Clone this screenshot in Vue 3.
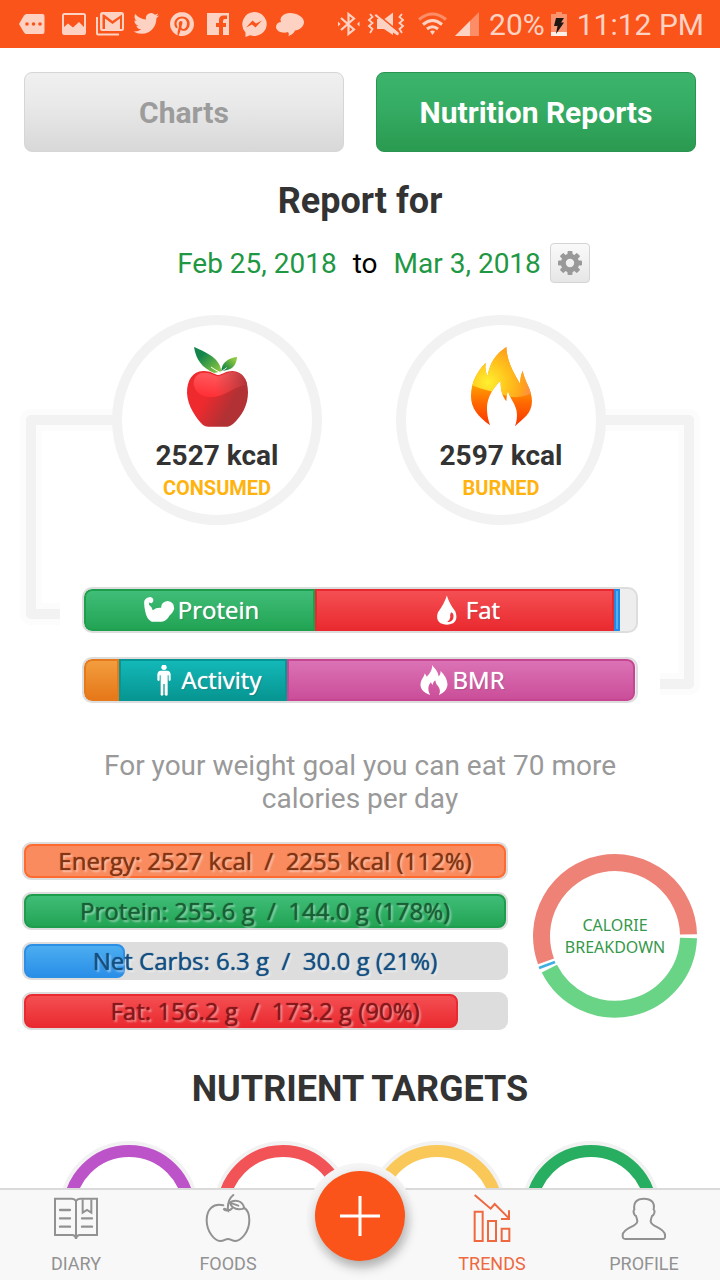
<script setup>
const intake = [
  { key: 'protein', label: 'Protein', width: 231 / 552 },
  { key: 'fat', label: 'Fat', width: 299 / 552 },
  { key: 'carbs', label: '', width: 6 / 552 },
]
const burned = [
  { key: 'tef', label: '', width: 35 / 552 },
  { key: 'activity', label: 'Activity', width: 168 / 552 },
  { key: 'bmr', label: 'BMR', width: 348 / 552 },
]
const macros = [
  { key: 'energy', text: 'Energy: 2527 kcal  /  2255 kcal (112%)', pct: 100 },
  { key: 'protein', text: 'Protein: 255.6 g  /  144.0 g (178%)', pct: 100 },
  { key: 'carbs', text: 'Net Carbs: 6.3 g  /  30.0 g (21%)', pct: 21 },
  { key: 'fat', text: 'Fat: 156.2 g  /  173.2 g (90%)', pct: 90 },
]
const targets = [
  { color: '#bd53c9', value: '88%' },
  { color: '#f15356', value: '110%' },
  { color: '#fac858', value: '89%' },
  { color: '#28ae61', value: '100%' },
]
const teeth = [0, 45, 90, 135, 180, 225, 270, 315]
const pc = (f) => ({ width: f * 100 + '%' })
</script>

<template>
  <div class="screen">
    <header class="status">
      <svg class="notes" viewBox="18 10 290 28" width="290" height="28" aria-hidden="true">
        <g fill="currentColor">
          <path d="M26.500 14H42.500Q44.500 14 44.500 16V32Q44.500 34 42.500 34H26.500Q25 34 24 32.500L19 24L24 15.500Q25 14 26.500 14Z" />
          <path fill-rule="evenodd" d="M64.500 13H83.500Q86 13 86 15.500V32.500Q86 35 83.500 35H64.500Q62 35 62 32.500V15.500Q62 13 64.500 13ZM64 15V27L68 23.500L73 27.500L79 22L84 27V15Z" />
          <path d="M96 17H98V33.500H119V35.500H98Q96 35.500 96 33.500Z" />
          <path fill-rule="evenodd" d="M102.500 12H121.500Q124 12 124 14.500V28.500Q124 31 121.500 31H102.500Q100 31 100 28.500V14.500Q100 12 102.500 12ZM102.500 14.500V29H105V18.500L112.500 24L120 18.500V29H122V14.500L112.500 21L104 14.500Z" />
          <path transform="translate(133.500 10.700) scale(1.060)" d="M23.953 4.570a10 10 0 01-2.825.775 4.958 4.958 0 002.163-2.723c-.951.555-2.005.959-3.127 1.184a4.920 4.920 0 00-8.384 4.482C7.690 8.095 4.067 6.130 1.640 3.162a4.822 4.822 0 00-.666 2.475c0 1.710.870 3.213 2.188 4.096a4.904 4.904 0 01-2.228-.616v.060a4.923 4.923 0 003.946 4.827 4.996 4.996 0 01-2.212.085 4.936 4.936 0 004.604 3.417 9.867 9.867 0 01-6.102 2.105c-.390 0-.779-.023-1.170-.067a13.995 13.995 0 007.557 2.209c9.053 0 13.998-7.496 13.998-13.985 0-.210 0-.420-.015-.630A9.935 9.935 0 0024 4.590z" />
          <path transform="translate(170 12)" d="M12.017 0C5.396 0 .029 5.367.029 11.987c0 5.079 3.158 9.417 7.618 11.162-.105-.949-.199-2.403.041-3.439.219-.937 1.406-5.957 1.406-5.957s-.359-.720-.359-1.781c0-1.663.967-2.911 2.168-2.911 1.024 0 1.518.769 1.518 1.688 0 1.029-.653 2.567-.992 3.992-.285 1.193.600 2.165 1.775 2.165 2.128 0 3.768-2.245 3.768-5.487 0-2.861-2.063-4.869-5.008-4.869-3.410 0-5.409 2.562-5.409 5.199 0 1.033.394 2.143.889 2.741.099.120.112.225.085.345-.090.375-.293 1.199-.334 1.363-.053.225-.172.271-.401.165-1.495-.690-2.433-2.878-2.433-4.646 0-3.776 2.748-7.252 7.920-7.252 4.158 0 7.392 2.967 7.392 6.923 0 4.135-2.607 7.462-6.233 7.462-1.214 0-2.354-.629-2.758-1.379l-.749 2.848c-.269 1.045-1.004 2.352-1.498 3.146 1.123.345 2.306.535 3.550.535 6.607 0 11.985-5.365 11.985-11.987C23.970 5.390 18.592.026 11.985.026L12.017 0z" />
          <path d="M207 13H229V35H223V27H226V23H223V21Q223 19 225 19H227V15.500H223.500Q219 15.500 219 20V23H216V27H219V35H207Z" />
          <path d="M254 12A12.500 12 0 1 1 250 35.300L245.500 37V32.500A12.300 12.300 0 0 1 254 12Z" />
          <path d="M290 13C297 13 304 17 304 22C304 27 299 30 295 30.500C294 33 292 35 288.500 36Q289.500 33.500 288 32C283 34 276 31.500 276 27C276 24 278 22.500 281 22C279 17 284 13 290 13Z" />
        </g>
        <g fill="#fa541b">
          <circle cx="27" cy="24" r="1.800" /><circle cx="33.500" cy="24" r="1.800" /><circle cx="40" cy="24" r="1.800" />
          <path d="M246 27.500L252.500 20.500L256 23.500L262 20.500L255.500 27.500L252 24.500Z" />
        </g>
      </svg>
      <div class="system">
        <svg viewBox="336 10 144 28" width="144" height="28" aria-hidden="true">
          <g fill="none" stroke="currentColor" stroke-width="2.200">
            <path d="M341 18L354 29.500L348.500 34V14L354 18.500L341 30" />
            <path d="M338 21.500L340.500 24L338 26.500ZM359.500 21.500L357 24L359.500 26.500Z" fill="currentColor" stroke="none" />
            <path d="M370 14L372.500 17L369 20L372.500 23L369 26L372.500 29L370 33M402 14L399.500 17L403 20L399.500 23L403 26L399.500 29L402 33" stroke-width="1.800" />
          </g>
          <g fill="currentColor">
            <path d="M377 19H382L397 31.500L399 34L397.500 35.500L393 32.500V35L384 29H377Z" />
            <path d="M384.500 19L393 12.500V26Z" />
            <path d="M374.500 15.500L376 14L399 33L397.500 34.500Z" />
          </g>
          <g fill="none" stroke="currentColor" stroke-width="3">
            <path d="M419 19.500Q432.500 8.500 446 19.500" opacity=".45" />
            <path d="M423 24.500Q432.500 16.500 442 24.500M427 29Q432.500 24.500 438 29" />
          </g>
          <path d="M430 31.500Q432.500 29.500 435 31.500L432.500 35Z" fill="currentColor" />
          <path d="M455 36L479 12V36Z" fill="currentColor" opacity=".45" />
          <path d="M455 36L470 21V36Z" fill="currentColor" />
        </svg>
        <span>20%</span>
        <svg class="battery" viewBox="551 12 16 24" width="16" height="24" aria-hidden="true">
          <path d="M551 14H556V12H562V14H567V36H551Z" fill="currentColor" opacity=".5" />
          <path d="M551 32H567V36H551Z" fill="#fff" opacity=".85" />
          <path d="M556 18H564L561 22.500H564L556 34L557.500 26H554Z" fill="#1c1712" />
        </svg>
        <span>11:12 PM</span>
      </div>
    </header>

    <main>
      <div class="content">
        <div class="tabs">
          <button type="button" class="tab">Charts</button>
          <button type="button" class="tab active">Nutrition Reports</button>
        </div>

        <h1>Report for</h1>
        <div class="range">
          <a href="#from">Feb 25, 2018</a>
          <span>to</span>
          <a href="#until">Mar 3, 2018</a>
          <button type="button" class="gear" aria-label="Report settings">
            <svg viewBox="-12 -12 24 24" width="24" height="24">
              <rect v-for="t in teeth" :key="t" x="-2.500" y="-12" width="5" height="6" rx="1" :transform="`rotate(${t})`" fill="#999" />
              <circle r="6.700" fill="none" stroke="#999" stroke-width="5" />
            </svg>
          </button>
        </div>

        <section class="overview">
          <svg class="link left" width="96" height="300" viewBox="0 0 96 300" aria-hidden="true">
            <path class="halo" d="M96 11H11V205H40" /><path class="line" d="M96 11H11V205H40" />
          </svg>
          <svg class="link right" width="96" height="300" viewBox="0 0 96 300" aria-hidden="true">
            <path class="halo" d="M0 11H85V275H56" /><path class="line" d="M0 11H85V275H56" />
          </svg>

          <div class="circles">
            <div class="circle">
              <svg viewBox="558 142 183 240" width="61" height="80" aria-hidden="true">
                <defs>
                  <linearGradient id="skin" x1="0" y1=".2" x2="1" y2=".7"><stop offset=".35" stop-color="#ee2a2e" /><stop offset=".75" stop-color="#b13134" /></linearGradient>
                  <linearGradient id="gloss" x1=".3" y1="1" x2=".6" y2="0"><stop offset="0" stop-color="#ff2f35" /><stop offset="1" stop-color="#ff5f63" /></linearGradient>
                  <linearGradient id="glossfade" x1="0" y1="0" x2="1" y2="0"><stop offset=".4" stop-color="#c03a3d" stop-opacity="0" /><stop offset="1" stop-color="#b03337" /></linearGradient>
                  <linearGradient id="leafa" x1="0" y1="0" x2="1" y2="1"><stop offset=".3" stop-color="#13854b" /><stop offset=".9" stop-color="#84c440" /></linearGradient>
                  <linearGradient id="leafb" x1="0" y1="1" x2="1" y2="0"><stop offset=".1" stop-color="#0d8046" /><stop offset=".8" stop-color="#8ac640" /></linearGradient>
                </defs>
                <path fill="url(#skin)" d="M652 226C638 224 630 213 606 214C575 216 558 240 558 280C560 320 585 355 606 376Q612 381 622 381H680Q688 380 696 373C722 350 741 318 741 278C741 240 725 215 694 214C675 214 665 224 652 226Z" />
                <path fill="url(#gloss)" d="M652 230C638 228 630 218 606 219C585 221 573 242 580 262C587 285 610 293 635 292C675 289 690 264 738 252C732 232 718 219 694 218C675 218 665 228 652 230Z" />
                <path fill="url(#glossfade)" d="M652 230C638 228 630 218 606 219C585 221 573 242 580 262C587 285 610 293 635 292C675 289 690 264 738 252C732 232 718 219 694 218C675 218 665 228 652 230Z" />
                <path fill="url(#leafa)" d="M579 142C620 160 657 176 661 215L640 220C603 205 585 180 579 142Z" />
                <path fill="url(#leafb)" d="M708 172C706 200 692 212 661 214C662 190 680 175 708 172Z" />
                <path fill="none" stroke="#fff" stroke-width="3" d="M630 202Q642 211 655 217M664 213Q672 209 677 204" />
              </svg>
              <strong>2527 kcal</strong>
              <em>CONSUMED</em>
            </div>
            <div class="circle">
              <svg viewBox="330 142 183 240" width="61" height="80" aria-hidden="true">
                <defs>
                  <linearGradient id="ember" gradientUnits="userSpaceOnUse" x1="0" y1="255" x2="0" y2="375"><stop offset="0" stop-color="#ffa000" /><stop offset=".45" stop-color="#ff6a00" /><stop offset="1" stop-color="#fa3600" /></linearGradient>
                  <radialGradient id="glow" gradientUnits="userSpaceOnUse" cx="380" cy="248" r="125"><stop offset="0" stop-color="#fff030" /><stop offset=".5" stop-color="#ffc31c" /><stop offset=".85" stop-color="#ffa31c" /><stop offset="1" stop-color="#ff9140" /></radialGradient>
                  <clipPath id="flame"><path d="M436 142C438 190 462 225 477 252C478 235 480 225 485 213C490 245 513 268 513 305C513 342 485 358 462 380C467 365 470 350 466 330C460 308 443 290 441 272C437 285 437 295 436 305C424 290 418 270 419 243C395 265 378 295 378 325C378 350 383 362 387 377C350 350 330 325 330 290C330 245 350 215 374 189C371 210 376 222 380 229C386 190 405 162 436 142Z" /></clipPath>
                </defs>
                <g clip-path="url(#flame)">
                  <rect x="330" y="142" width="183" height="240" fill="url(#ember)" />
                  <path d="M330 142H513V278C490 294 460 296 436 288C405 278 370 272 330 256Z" fill="url(#glow)" />
                </g>
              </svg>
              <strong>2597 kcal</strong>
              <em>BURNED</em>
            </div>
          </div>

          <div class="stack">
            <div class="meter">
              <div v-for="s in intake" :key="s.key" class="seg" :class="s.key" :style="pc(s.width)">
                <svg v-if="s.key === 'protein'" viewBox="432 117 93 79" width="31" height="26"><path fill="#fff" d="M449 117Q459 118 460 126Q460 134 454 136L446 134L447 141Q457 147 458 157Q470 148 484 150Q482 132 503 129Q524 131 523 153Q518 168 509 173Q500 191 484 192H455Q440 186 435 160Q430 137 433 127Q438 118 449 117Z" /></svg>
                <svg v-if="s.key === 'fat'" viewBox="232 106 61 92" width="20" height="31"><path fill="#fff" fill-rule="evenodd" d="M262 106Q269 130 288 155Q297 180 281 191Q262 200 243 191Q227 180 235 157Q255 130 262 106ZM275 157Q286 160 281 178Q275 189 263 187Q275 178 272 168Q272 162 275 157Z" /></svg>
                <span v-if="s.label">{{ s.label }}</span>
              </div>
            </div>
            <div class="meter">
              <div v-for="s in burned" :key="s.key" class="seg" :class="s.key" :style="pc(s.width)">
                <svg v-if="s.key === 'activity'" viewBox="471 315 42 93" width="14" height="31"><g fill="#fff"><circle cx="492" cy="322" r="8" /><path d="M482 332H502Q511 333 512 343V360Q509 366 506 361V346H503V405Q500 409 494 405V372H490V405Q485 409 482 405V346H479V361Q475 366 472 360V343Q473 333 482 332Z" /></g></svg>
                <svg v-if="s.key === 'bmr'" viewBox="180 315 83 93" width="28" height="31"><path fill="#fff" d="M216 315C222 325 234 332 235 349L239 345Q242 340 241 333C253 345 262 358 262 375C259 393 248 398 236 406Q243 393 235 380Q227 373 225 361Q218 366 217 375L212 367C202 378 203 392 210 405C190 398 180 387 181 372C183 358 191 352 194 340L200 350C207 342 217 331 216 315Z" /></svg>
                <span v-if="s.label">{{ s.label }}</span>
              </div>
            </div>
          </div>
        </section>

        <p class="goal">For your weight goal you can eat 70 more calories per day</p>

        <section class="summary">
          <div class="bars">
            <div v-for="m in macros" :key="m.key" class="bar" :class="m.key">
              <div class="fill" :style="{ width: m.pct + '%' }"></div>
              <span>{{ m.text }}</span>
            </div>
          </div>
          <div class="donut">
            <svg viewBox="517 68 498 498" width="166" height="166" aria-hidden="true">
              <g fill="none" stroke-width="51" transform="translate(766 317)">
                <path stroke="#ef8277" d="M220.500 -5A220.500 220.500 0 1 0 -207 76" />
                <path stroke="#3fb1e0" stroke-width="8" d="M-228 96L-180 78" />
                <path stroke="#6ad486" d="M220.500 6A220.500 220.500 0 0 1 -197 98" />
              </g>
            </svg>
            <span>CALORIE<br>BREAKDOWN</span>
          </div>
        </section>

        <h2>NUTRIENT TARGETS</h2>
        <div class="rings">
          <div v-for="t in targets" :key="t.value" class="ring">
            <svg viewBox="0 0 140 140" width="140" height="140" aria-hidden="true">
              <circle cx="70" cy="70" r="70" fill="#f2f2f2" />
              <circle cx="70" cy="70" r="60" fill="#fff" :stroke="t.color" stroke-width="12" />
            </svg>
            <span>{{ t.value }}</span>
          </div>
        </div>
      </div>
    </main>

    <nav>
      <a href="#diary">
        <svg viewBox="156 222 144 144" width="48" height="48" aria-hidden="true">
          <g fill="none" stroke="currentColor" stroke-width="6">
            <path d="M228 243Q224 236 216 236H165V345H218Q227 346 228 357Q229 346 238 345H291V236H240Q232 236 228 243V350" />
            <path d="M180 270H210M180 295H210M180 320H210M246 295H276M246 320H276" stroke-width="7" stroke-linecap="round" />
            <path d="M248 238V278L261 270L274 278V238" />
          </g>
        </svg>
        <span>DIARY</span>
      </a>
      <a href="#foods">
        <svg viewBox="609 222 144 144" width="48" height="48" aria-hidden="true">
          <g fill="none" stroke="currentColor" stroke-width="6" stroke-linecap="round">
            <path d="M693 265C685 276 667 271 669 267C672 264 678 270 681 272C679 250 684 235 697 225" />
            <path d="M667 256C637 249 617 267 617 300C617 335 640 362 658 363C670 363 672 357 681 357C690 357 692 363 704 363C722 360 745 335 745 300C745 280 738 268 728 262" />
            <path d="M686 248C700 238 725 240 730 265C710 271 693 266 686 248L712 257" />
          </g>
        </svg>
        <span>FOODS</span>
      </a>
      <div class="add">
        <button type="button" aria-label="Add entry">
          <svg viewBox="0 0 40 40" width="40" height="40"><path d="M0 20H40M20 0V40" stroke="#fff" stroke-width="3" /></svg>
        </button>
      </div>
      <a href="#trends" class="on">
        <svg viewBox="327 222 144 144" width="48" height="48" aria-hidden="true">
          <g fill="none" stroke="currentColor" stroke-width="6">
            <path d="M347 275H371V363H347ZM387 303H411V363H387ZM428 326H451V363H428Z" />
            <path d="M347 225L395 266L407 252L450 295M426 297H450V271" />
          </g>
        </svg>
        <span>TRENDS</span>
      </a>
      <a href="#profile">
        <svg viewBox="780 222 144 144" width="48" height="48" aria-hidden="true">
          <path fill="none" stroke="currentColor" stroke-width="6" d="M852 236C830 236 820 248 823 268Q819 272 822 281Q824 287 828 288Q831 296 832 304C830 322 790 322 788 345Q787 357 796 357H908Q917 357 915 345C913 322 874 322 872 304Q873 296 876 288Q881 286 883 279Q885 272 881 268C885 248 874 236 852 236Z" />
        </svg>
        <span>PROFILE</span>
      </a>
    </nav>
  </div>
</template>

<style>
body { margin: 0; background: #fff; }
</style>

<style scoped>
* { box-sizing: border-box; }
.screen { height: 100vh; display: flex; flex-direction: column; font-family: Roboto, "Liberation Sans", sans-serif; color: #333; background: #fff; }
svg { display: block; flex: none; }
button { font: inherit; padding: 0; cursor: pointer; }
a { text-decoration: none; }

.status { flex: none; height: 48px; padding: 0 16px 0 18px; display: flex; align-items: center; justify-content: space-between; background: #fa541b; color: #fed2c3; font-size: 30px; }
.system { display: flex; align-items: center; gap: 9px; white-space: nowrap; }
.battery { margin: 0 1px 0 -3px; }

main { flex: 1; min-height: 0; overflow: hidden; }
.content { max-width: 720px; margin: 0 auto; padding-top: 24px; }
.tabs { display: grid; grid-template-columns: 1fr 1fr; gap: 32px; padding: 0 24px; }
.tab { height: 80px; border: 1px solid #d6d6d6; border-radius: 8px; font-size: 30px; font-weight: 700; color: #9c9c9c; background: linear-gradient(#f0f0f0, #e9e9e9 40%, #d8d8d8); }
.tab.active { color: #fff; border-color: #2a9450; background: linear-gradient(#3cb46c, #36ad65 40%, #2a9a50); }
h1, h2 { margin: 0; font-size: 36px; line-height: 44px; font-weight: 700; text-align: center; }
h1 { margin-top: 27px; }
.range { margin-top: 20px; padding-left: 47px; display: flex; justify-content: center; align-items: center; gap: 16px; font-size: 28px; line-height: 34px; color: #000; }
.range a, .range span { padding-top: 2px; }
.range a { color: #1f9743; }
.gear { width: 40px; height: 40px; margin-left: -7px; display: grid; place-items: center; border: 1px solid #d4d4d4; border-radius: 4px; background: linear-gradient(#fafafa, #e6e6e6); }

.overview { position: relative; margin-top: 32px; }
.link { position: absolute; top: 94px; }
.link.left { left: 20px; }
.link.right { right: 20px; }
.link path { fill: none; stroke-linejoin: round; }
.halo { stroke: #fcfcfc; stroke-width: 22px; }
.line { stroke: #f2f2f2; stroke-width: 10px; }
.circles { position: relative; display: flex; justify-content: center; gap: 74px; padding-right: 2px; }
.circle { width: 210px; height: 210px; padding-top: 22px; display: flex; flex-direction: column; align-items: center; border: 10px solid #f2f2f2; border-radius: 50%; background: #fff; }
.circle strong { margin-top: 11px; font-size: 28px; line-height: 36px; }
.circle em { margin-top: 2px; font-size: 20px; line-height: 24px; font-style: normal; font-weight: 700; color: #ffb30f; }
.stack { margin: 62px 82px 0; display: grid; gap: 24px; }
.meter { height: 46px; display: flex; overflow: hidden; border: 2px solid #ddd; border-radius: 10px; background: #eee; }
.seg { display: flex; align-items: center; justify-content: center; gap: 3px; border: 2px solid; color: #fff; font: 24px/32px "Open Sans", "Noto Sans", sans-serif; text-shadow: 0 0 1px #fff, 1px 1px 1px rgba(0, 0, 0, .2); }
.seg:first-child { border-radius: 8px 0 0 8px; }
.seg span { color: #fff; }
.seg.protein { gap: 3px; padding-left: 4px; border-color: #1e9f4e; background: linear-gradient(#40bd78, #22a454); }
.seg.fat { gap: 9px; padding-left: 8px; border-color: #e8292f; background: linear-gradient(#f44f53, #ea2b30); }
.seg.carbs { border-color: #2389e2; background: #51aef0; }
.seg.tef { border-color: #e6791c; background: linear-gradient(#f29d3e, #e67819); }
.seg.activity { gap: 11px; padding-left: 12px; border-color: #079693; background: linear-gradient(#13b8b8, #079692); }
.seg.bmr { gap: 5px; padding-left: 2px; border-color: #c74692; border-radius: 0 8px 8px 0; background: linear-gradient(#db72b6, #cb4e99); }

.goal { margin: 46px 80px 0; font-size: 28px; line-height: 33px; text-align: center; color: #999; }

.summary { margin-top: 27px; padding: 0 22px; display: flex; align-items: center; gap: 24px; }
.bars { flex: 1; display: grid; gap: 12px; }
.bar { height: 38px; padding: 2px; display: grid; align-items: center; border-radius: 9px; background: #ddd; }
.bar > * { grid-area: 1 / 1; }
.bar span { text-align: center; white-space: pre; font: 24px/34px "Open Sans", "Noto Sans", sans-serif; text-shadow: 0 0 1px currentColor, 2px 2px 2px rgba(255, 255, 255, .5); }
.fill { height: 34px; border: 2px solid; border-radius: 8px; }
.energy { color: #823413; }
.energy .fill { border-color: #ff6a2e; background: #f98b5f; }
.bar.protein { color: #195f35; }
.protein .fill { border-color: #1e9d4d; background: linear-gradient(#40bd78, #22a454); }
.bar.carbs { color: #154f82; }
.carbs .fill { border-color: #2b8fe6; background: linear-gradient(#4cadf0, #2a8fe8); }
.bar.fat { color: #86171a; }
.fat .fill { border-color: #e92b31; background: linear-gradient(#f44f53, #ea2b30); }
.donut { display: grid; place-items: center; }
.donut > * { grid-area: 1 / 1; }
.donut span { text-align: center; font: 16px/22px "Noto Sans", "Open Sans", sans-serif; color: #35984a; }

h2 { margin-top: 37px; }
.rings { margin-top: 30px; display: flex; justify-content: center; gap: 14px; }
.ring { display: grid; place-items: center; }
.ring > * { grid-area: 1 / 1; }
.ring span { font-size: 26px; margin-bottom: 26px; color: #888; }

nav { position: relative; flex: none; height: 92px; display: flex; border-top: 2px solid #dadada; background: #f8f8f8; }
nav a { flex: 1; padding-top: 4px; display: flex; flex-direction: column; align-items: center; gap: 11px; color: #929292; font-size: 18px; line-height: 22px; }
nav a.on { color: #ee6840; }
.add { flex: none; width: 106px; height: 106px; margin: -27px 3px 0; display: grid; place-items: center; border-radius: 50%; background: #f5f5f5; }
.add button { width: 90px; height: 90px; display: grid; place-items: center; border: 0; border-radius: 50%; background: #fa541b; box-shadow: 2px 6px 12px rgba(0, 0, 0, .3); }
</style>
